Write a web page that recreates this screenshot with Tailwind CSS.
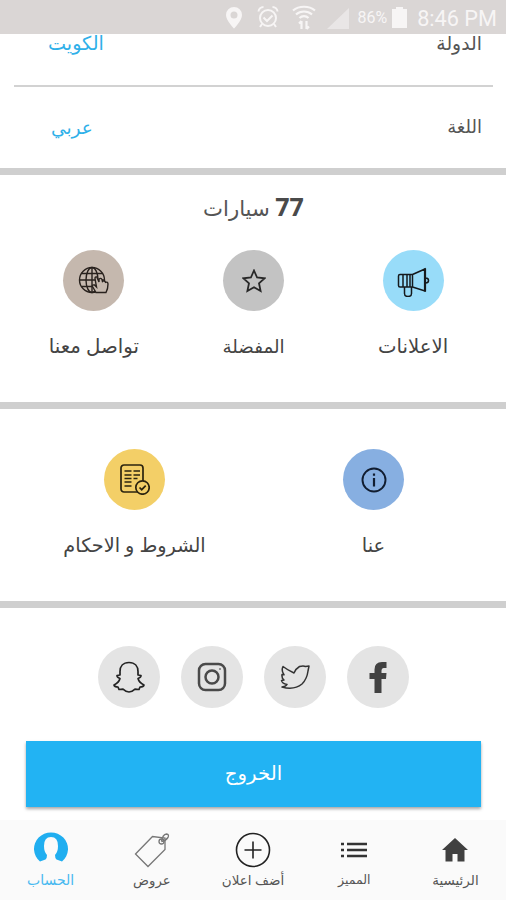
<!DOCTYPE html>
<html lang="ar" dir="rtl">
<head>
  <meta charset="UTF-8" />
  <meta name="viewport" content="width=device-width, initial-scale=1.0" />
  <title>77 سيارات - الحساب</title>
  <script src="https://cdn.jsdelivr.net/npm/@tailwindcss/browser@4"></script>
</head>
<body class="w-[506px] h-[900px] overflow-hidden bg-white flex flex-col font-['Noto_Sans','DejaVu_Sans',sans-serif] text-[#555]">

  <!-- Status bar -->
  <header dir="ltr" class="relative z-10 h-[34px] shrink-0 bg-[#dad6d5] flex items-center justify-end pr-[9px] font-[Roboto,sans-serif] text-[#f7f5f5]">
    <svg class="w-[18px] h-[23px] mr-[14px]" viewBox="0 0 18 23" fill="currentColor"><path fill-rule="evenodd" d="M9 1a8 8 0 0 0-8 8c0 5.500 8 13.500 8 13.500S17 14.500 17 9a8 8 0 0 0-8-8zm0 4.500a3.500 3.500 0 1 1 0 7 3.500 3.500 0 0 1 0-7z"/></svg>
    <svg class="w-[22px] h-[24px] mr-[13px]" viewBox="0 0 22 24" fill="none" stroke="currentColor" stroke-width="2"><circle cx="11" cy="13" r="8"/><path d="M6.500 12.500l3.500 3.500 5.500-5.500M1.500 6.500a5 5 0 0 1 5-4.500M20.500 6.500a5 5 0 0 0-5-4.500M5 19l-2 3M17 19l2 3"/></svg>
    <svg class="w-[24px] h-[25px] mr-[11px]" viewBox="0 0 24 25" fill="none" stroke="currentColor" stroke-width="2.200"><path d="M1 5.500c6-5 16-5 22 0M4 9.500c4.500-4 11.500-4 16 0M7.500 13c2.500-2.500 6.500-2.500 9 0M9.500 24v-8M7 18.500L9.500 16M14.500 16v8M17 21.500L14.500 24"/></svg>
    <svg class="w-[22px] h-[21px] mr-[8px] mt-[3px]" viewBox="0 0 22 21" fill="#e9e6e6"><path d="M22 0v21H0z"/></svg>
    <span class="text-[16px] mr-[5px] mt-[2px]">86%</span>
    <svg class="w-[15px] h-[21px] mr-[10px]" viewBox="0 0 15 21" fill="currentColor"><path d="M4 0h7v2h4v19H0V2h4z"/></svg>
    <span class="text-[21.700px] leading-none mt-[3px]">8:46 PM</span>
  </header>

  <main class="flex-1 flex flex-col">
    <section class="pl-[14px] pr-[13px] text-[18px]">
      <div class="h-[53px] pl-[34px] pr-[11px] flex justify-between border-b-2 border-[#d2d2d2]">
        <span class="text-[18.800px] leading-[18px]">الدولة</span>
        <span class="text-[19.200px] leading-[18px] text-[#2fb0e9]">الكويت</span>
      </div>
      <div class="h-[81px] pl-[37px] pr-[11px] pb-[2px] flex items-center justify-between">
        <span>اللغة</span>
        <span class="text-[18.500px] text-[#2fb0e9]">عربي</span>
      </div>
    </section>
    <div class="h-[7px] bg-[#cfcfcf]"></div>

    <section class="h-[227px] pl-[14px] pr-[13px]">
      <h1 class="pt-[15px] h-[75px] text-center text-[21.200px] leading-[32px]"><b class="text-[25px] tracking-[1.800px] text-[#4a4a4a]">77</b> سيارات</h1>
      <div class="grid grid-cols-3 leading-[25px] text-[#444]">
        <div class="flex flex-col items-center">
          <div class="size-[61px] rounded-full bg-[#98dcf9] flex items-center justify-center">
            <svg class="w-[34px] h-[32px]" viewBox="0 0 34 32" fill="none" stroke="#151a1d" stroke-width="1.500"><path d="M4 9.500h12.500v12.500H4q-1.500 0-1.500-1.500v-9.500q0-1.500 1.500-1.500zM7 9.500V22M11 9.500V22M14 9.500V22M16.500 9.500L29 4v22l-12.500-4M29.500 13q3 0 3 2.500t-3 2.500M8.500 22v6.500q0 3 3.500 3t3.500-3V22"/><path d="M29 3.500v23" stroke-width="2.200"/></svg>
          </div>
          <span class="mt-[22px] text-[19.700px]">الاعلانات</span>
        </div>
        <div class="flex flex-col items-center">
          <div class="size-[61px] rounded-full bg-[#c3c3c3] flex items-center justify-center">
            <svg class="size-[24px]" viewBox="0 0 24 24" fill="none" stroke="#282828" stroke-width="1.800"><path d="M12 1.500l3.100 7 7.400.8-5.500 5 1.600 7.700L12 18.200 5.400 22 7 14.300l-5.500-5 7.400-.8z"/></svg>
          </div>
          <span class="mt-[22px] text-[18.300px]">المفضلة</span>
        </div>
        <div class="flex flex-col items-center">
          <div class="size-[61px] rounded-full bg-[#c5b8ae] flex items-center justify-center">
            <svg class="w-[32px] h-[30px]" viewBox="0 0 32 30" fill="none" stroke="#29221e" stroke-width="1.400"><circle cx="14" cy="14" r="12.500"/><ellipse cx="14" cy="14" rx="6" ry="12.500"/><path d="M14 1.500v25M1.500 14h25M3.500 7.500h21M3.500 20.500h21"/><path fill="#c5b8ae" d="M18 26.500l-3.500-6q-.5-2 2-1.500l2 2-1.500-8.500q0-2 1.800-1.500l2.200 5v-3q2-1.500 3 .5l.5 2q2-1.500 3 .8 2.500-.8 2.500 1.700 0 5-2 8.500h-10z"/></svg>
          </div>
          <span class="mt-[22px] text-[19.800px]">تواصل معنا</span>
        </div>
      </div>
    </section>
    <div class="h-[7px] bg-[#cfcfcf]"></div>

    <section class="h-[192px] pl-[15px] pr-[13px] pt-[40px] grid grid-cols-2 leading-[26px] text-[#444]">
      <div class="flex flex-col items-center">
        <div class="size-[61px] rounded-full bg-[#87afe1] flex items-center justify-center">
          <svg class="size-[26px]" viewBox="0 0 26 26" fill="none" stroke="#111d30" stroke-width="1.900"><circle cx="13" cy="13" r="11.500"/><path d="M13 11v8.500M13 6.500v2.300" stroke-width="2.200"/></svg>
        </div>
        <span class="mt-[22px] text-[19.500px]">عنا</span>
      </div>
      <div class="flex flex-col items-center">
        <div class="size-[61px] rounded-full bg-[#f3cf67] flex items-center justify-center">
          <svg class="w-[30px] h-[31px]" viewBox="0 0 30 31" fill="none" stroke="#2b240f" stroke-width="1.700"><rect x="1" y="1" width="22" height="27" rx="3"/><path d="M4.500 7h7M13.500 7H20M4.500 11h7M13.500 11H20M4.500 14.500h7M13.500 14.500h4M4.500 18h7M4.500 22h7"/><circle cx="22.500" cy="23.500" r="6.700" fill="#f3cf67"/><path d="M19.500 23.500l2.200 2.200 4-4"/></svg>
        </div>
        <span class="mt-[22px] text-[19.300px]">الشروط و الاحكام</span>
      </div>
    </section>
    <div class="h-[7px] bg-[#cfcfcf]"></div>

    <section class="pt-[38px] pl-[1px] flex justify-center gap-[21px]">
      <a class="size-[62px] rounded-full bg-[#e4e4e4] flex items-center justify-center">
        <svg class="w-[18px] h-[32px]" viewBox="0 0 18 32" fill="#424242"><path d="M17.500 1v6h-3q-2 0-2 2.500V12h5l-.5 6h-4.500v14h-7V18H.500v-6h5V8.500Q5.500 1 13 1z"/></svg>
      </a>
      <a class="size-[62px] rounded-full bg-[#e4e4e4] flex items-center justify-center">
        <svg class="w-[30px] h-[26px]" viewBox="0 0 30 26" fill="none" stroke="#333" stroke-width="1.500" stroke-linejoin="round"><path d="M3 2.500q4.500 3.500 11 6.500 2-4.500 5.500-6.500 4-1 6 0l3.500-.5-1 5q-1 8-6 13-8 6.500-20 3 4-.5 5-2.500-5-1-5.500-4l2.500-.5Q1.500 14 2 10.500l2 .3Q1 6.500 3 2.500z"/></svg>
      </a>
      <a class="size-[62px] rounded-full bg-[#e4e4e4] flex items-center justify-center">
        <svg class="size-[30px]" viewBox="0 0 30 30" fill="none" stroke="#4a4a4a" stroke-width="2.500"><rect x="2" y="2" width="26" height="26" rx="6.500"/><circle cx="15" cy="15" r="6.500"/><circle cx="23" cy="7" r="1" fill="#777" stroke="none"/></svg>
      </a>
      <a class="size-[62px] rounded-full bg-[#e4e4e4] flex items-center justify-center">
        <svg class="w-[32px] h-[32px]" viewBox="0 0 32 32" fill="none" stroke="#222" stroke-width="1.700" stroke-linejoin="round"><path d="M16 1.500c-6 0-9 4-9 9v3.500l-3 .5q0 2 3 3-1 4-6 6.500.5 2 4 2l1 2.500 4-.3q3 2.800 6 2.800t6-2.800l4 .3 1-2.500q3.500 0 4-2-5-2.500-6-6.500 3-1 3-3l-3-.5v-3.500c0-5-3-9-9-9z"/></svg>
      </a>
    </section>

    <button class="mt-[33px] ml-[26px] mr-[25px] h-[66px] pb-[2px] bg-[#22b3f3] text-white text-[19.700px] shadow-[0_2px_3px_rgba(0,0,0,0.350)]">الخروج</button>
  </main>

  <!-- Bottom navigation -->
  <nav class="h-[80px] shrink-0 bg-[#fafafa] grid grid-cols-5 text-[13.500px] leading-[20px] text-[#555]">
    <a class="flex flex-col items-center">
      <svg class="mt-[17px] w-[26px] h-[26px]" viewBox="0 0 26 26" fill="#404040"><path d="M13 1L0 13h3.500v11.500h7V17h5v7.500h7V13H26z"/></svg>
      <span class="mt-[7px]">الرئيسية</span>
    </a>
    <a class="flex flex-col items-center">
      <svg class="mt-[17px] w-[26px] h-[26px]" viewBox="0 0 26 26" fill="none" stroke="#333" stroke-width="2.300"><path d="M0 7h3M6 7h20M0 13h3M6 13h20M0 19h3M6 19h20"/></svg>
      <span class="mt-[7px] text-[12.500px]">المميز</span>
    </a>
    <a class="flex flex-col items-center">
      <svg class="mt-[12px] size-[36px]" viewBox="0 0 36 36" fill="none" stroke="#222" stroke-width="1.600"><circle cx="18" cy="18" r="16.500"/><path d="M18 9.500v17M9.500 18h17"/></svg>
      <span class="mt-[2px]">أضف اعلان</span>
    </a>
    <a class="flex flex-col items-center">
      <svg class="mt-[12px] size-[36px]" viewBox="0 0 36 36" fill="none" stroke="#777" stroke-width="1.300"><path d="M1.500 22L18.500 4.500 31 6v11.500L14 34.500z"/><circle cx="27.500" cy="9.500" r="2.500"/><path d="M27.500 9.500q1-7 5-7.500 3 .5 1.500 3.500-2.500 3.500-6.500 4"/></svg>
      <span class="mt-[2px] text-[13.200px]">عروض</span>
    </a>
    <a class="flex flex-col items-center text-[#48b9f0]">
      <svg class="mt-[11px] w-[34px] h-[34px]" viewBox="0 0 34 34" fill="#20aef0"><path d="M6 30.500A17 16.500 0 1 1 28 30.500L22.500 28.500q-1.500-1-1.500-4.500 3-3 3-9 0-9-7-9t-7 9q0 6 3 9 0 3.500-1.500 4.500z"/></svg>
      <span class="mt-[5px] text-[14px]">الحساب</span>
    </a>
  </nav>
</body>
</html>
